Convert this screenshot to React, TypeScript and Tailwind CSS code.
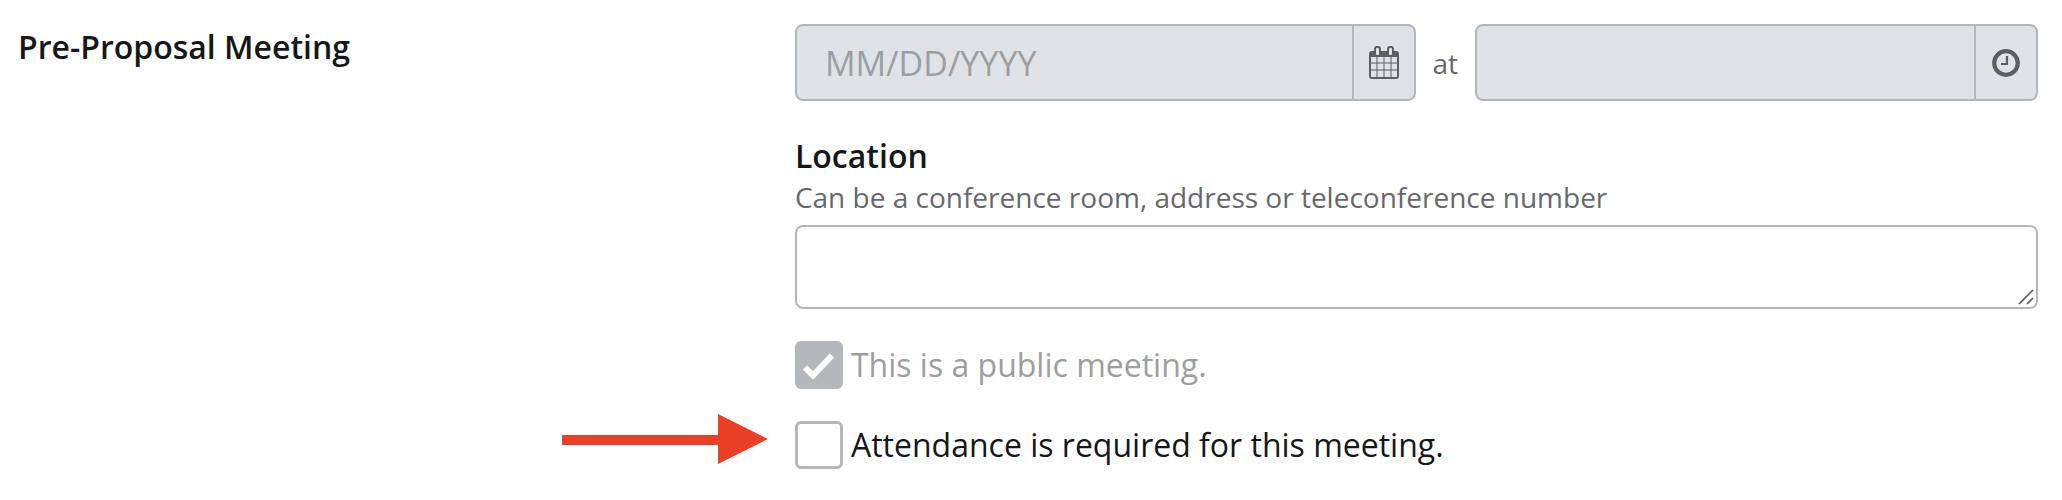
import React, { useState } from 'react';

function CalendarIcon() {
  return (
    <svg width="30" height="33" viewBox="0 0 30 33" aria-hidden="true">
      <rect x="0" y="5" width="30" height="28" rx="3" fill="#5c5e62" />
      <g fill="#dfe2e7">
        <rect x="2" y="11" width="5.5" height="5.5" />
        <rect x="8.5" y="11" width="6" height="5.5" />
        <rect x="15.5" y="11" width="6" height="5.5" />
        <rect x="22.5" y="11" width="5.5" height="5.5" />
        <rect x="2" y="17.5" width="5.5" height="6" />
        <rect x="8.5" y="17.5" width="6" height="6" />
        <rect x="15.5" y="17.5" width="6" height="6" />
        <rect x="22.5" y="17.5" width="5.5" height="6" />
        <rect x="2" y="24.5" width="5.5" height="6.5" />
        <rect x="8.5" y="24.5" width="6" height="6.5" />
        <rect x="15.5" y="24.5" width="6" height="6.5" />
        <rect x="22.5" y="24.5" width="5.5" height="6.5" />
      </g>
      <rect x="5" y="0" width="7" height="10" rx="3" fill="#5c5e62" />
      <rect x="18" y="0" width="7" height="10" rx="3" fill="#5c5e62" />
      <rect x="7" y="2" width="3" height="7" rx="1" fill="#dfe2e7" />
      <rect x="20" y="2" width="3" height="7" rx="1" fill="#dfe2e7" />
    </svg>
  );
}

function ClockIcon() {
  return (
    <svg width="28" height="28" viewBox="0 0 28 28" fill="none" stroke="#5c5e62" aria-hidden="true">
      <circle cx="14" cy="14" r="11.8" strokeWidth="4.2" />
      <path d="M15 7v8H9" strokeWidth="2.2" />
    </svg>
  );
}

type CheckFieldProps = {
  label: string;
  checked: boolean;
  disabled?: boolean;
  onChange?: (checked: boolean) => void;
};

function CheckField({ label, checked, disabled = false, onChange }: CheckFieldProps) {
  return (
    <label className={`flex items-center gap-2 ${disabled ? 'text-[#9c9ea2]' : 'text-[#151719]'}`}>
      <span className="relative block size-12 shrink-0">
        <input
          type="checkbox"
          checked={checked}
          disabled={disabled}
          onChange={(e) => onChange?.(e.target.checked)}
          className="block size-12 appearance-none rounded-md border-3 border-[#b4b8bd] bg-white checked:bg-[#b4b8bd]"
        />
        {checked && (
          <svg className="pointer-events-none absolute inset-0" width="48" height="48" viewBox="0 0 48 48" aria-hidden="true">
            <path d="M10 26.5 18 34.5 37 14.5" fill="none" stroke="#fff" strokeWidth="6" />
          </svg>
        )}
      </span>
      <span>{label}</span>
    </label>
  );
}

export default function App() {
  const [required, setRequired] = useState(false);

  return (
    <main className="grid grid-cols-[5fr_8fr] bg-white pt-6 pr-6 pl-[18px] font-['Open_Sans',sans-serif] text-[32px] leading-[46px] text-[#151719]">
      <div className="flex flex-col justify-between pb-[5px]">
        <h2 className="font-semibold">Pre-Proposal Meeting</h2>
        <svg className="mr-[27px] self-end" width="206" height="50" viewBox="0 0 206 50" fill="#ea4126" aria-hidden="true">
          <path d="M0 21h156V0l50 25-50 25V31H0z" />
        </svg>
      </div>

      <div>
        <div className="flex items-center">
          <div className="flex h-[77px] w-1/2 overflow-hidden rounded-lg border-2 border-[#b4b8bd] bg-[#dfe2e7]">
            <input
              type="text"
              aria-label="Meeting date"
              placeholder="MM/DD/YYYY"
              disabled
              className="min-w-0 flex-1 pl-7 text-[34px] placeholder:text-[#9c9ea2]"
            />
            <button type="button" disabled aria-label="Choose date" className="flex w-[62px] items-center justify-center border-l-2 border-[#b4b8bd]">
              <CalendarIcon />
            </button>
          </div>
          <span className="pr-[17px] pl-4 text-[28px] text-[#66686b]">at</span>
          <div className="flex h-[77px] flex-1 overflow-hidden rounded-lg border-2 border-[#b4b8bd] bg-[#dfe2e7]">
            <input type="text" aria-label="Meeting time" disabled className="min-w-0 flex-1 pl-7 text-[34px]" />
            <button type="button" disabled aria-label="Choose time" className="flex w-[62px] items-center justify-center border-l-2 border-[#b4b8bd]">
              <ClockIcon />
            </button>
          </div>
        </div>

        <label htmlFor="location" className="mt-8 block font-semibold">
          Location
        </label>
        <p id="location-hint" className="text-[28px] leading-9 text-[#66686b]">
          Can be a conference room, address or teleconference number
        </p>
        <div className="relative mt-[10px]">
          <textarea
            id="location"
            aria-describedby="location-hint"
            className="block h-[84px] w-full resize-none rounded-lg border-2 border-[#b4b8bd] bg-white px-7 py-4"
          />
          <svg className="pointer-events-none absolute right-1 bottom-1" width="16" height="16" viewBox="0 0 16 16" stroke="#55575a" strokeWidth="1.6" aria-hidden="true">
            <path d="M1 15 15 1M9 15l6-6" />
          </svg>
        </div>

        <div className="mt-8 flex flex-col gap-8">
          <CheckField label="This is a public meeting." checked disabled />
          <CheckField label="Attendance is required for this meeting." checked={required} onChange={setRequired} />
        </div>
      </div>
    </main>
  );
}
